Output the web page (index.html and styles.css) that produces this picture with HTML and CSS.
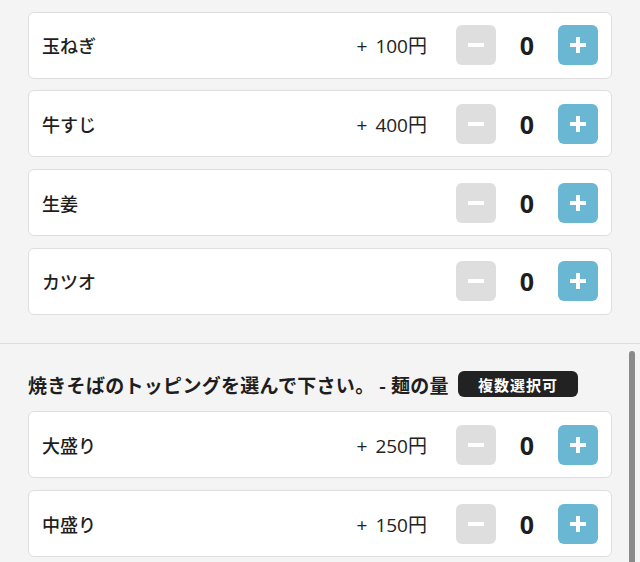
FILE: index.html
```html
<!DOCTYPE html>
<html lang="ja">
<head>
<meta charset="utf-8">
<link rel="stylesheet" href="styles.css">
</head>
<body>
<section class="group">
  <div class="card card-tail"></div>
  <div class="card">
    <span class="label">玉ねぎ</span>
    <span class="price">+ 100円</span>
    <div class="stepper">
      <button class="btn minus"><span class="bar"></span></button>
      <span class="count">0</span>
      <button class="btn plus"><span class="bar"></span><span class="bar v"></span></button>
    </div>
  </div>
  <div class="card">
    <span class="label">牛すじ</span>
    <span class="price">+ 400円</span>
    <div class="stepper">
      <button class="btn minus"><span class="bar"></span></button>
      <span class="count">0</span>
      <button class="btn plus"><span class="bar"></span><span class="bar v"></span></button>
    </div>
  </div>
  <div class="card">
    <span class="label">生姜</span>
    <div class="stepper">
      <button class="btn minus"><span class="bar"></span></button>
      <span class="count">0</span>
      <button class="btn plus"><span class="bar"></span><span class="bar v"></span></button>
    </div>
  </div>
  <div class="card">
    <span class="label">カツオ</span>
    <div class="stepper">
      <button class="btn minus"><span class="bar"></span></button>
      <span class="count">0</span>
      <button class="btn plus"><span class="bar"></span><span class="bar v"></span></button>
    </div>
  </div>
</section>
<section class="group second">
  <div class="scrollbar"></div>
  <h2 class="heading"><span>焼きそばのトッピングを選んで下さい。 - 麺の量</span><span class="badge">複数選択可</span></h2>
  <div class="card">
    <span class="label">大盛り</span>
    <span class="price">+ 250円</span>
    <div class="stepper">
      <button class="btn minus"><span class="bar"></span></button>
      <span class="count">0</span>
      <button class="btn plus"><span class="bar"></span><span class="bar v"></span></button>
    </div>
  </div>
  <div class="card">
    <span class="label">中盛り</span>
    <span class="price">+ 150円</span>
    <div class="stepper">
      <button class="btn minus"><span class="bar"></span></button>
      <span class="count">0</span>
      <button class="btn plus"><span class="bar"></span><span class="bar v"></span></button>
    </div>
  </div>
</section>
</body>
</html>
```
FILE: styles.css
```css
html, body {
  margin: 0;
  padding: 0;
  background: #f4f4f4;
  font-family: "Noto Sans CJK JP", "Noto Sans", sans-serif;
  color: #1e1e1e;
  overflow: hidden;
  height: 562px;
}
.group {
  display: flex;
  flex-direction: column;
  gap: 11.7px;
  padding: 0 28px 28.5px;
}
.second {
  position: relative;
  border-top: 1px solid #dcdcdc;
  padding-top: 27px;
  gap: 12px;
}
.card {
  box-sizing: border-box;
  height: 67px;
  background: #fff;
  border: 1px solid #dedede;
  border-radius: 6px;
  display: flex;
  align-items: center;
  padding: 0 13px;
  flex-shrink: 0;
}
.card-tail {
  height: 12px;
  margin-top: -12px;
}
.label {
  flex: 1;
  font-size: 18px;
  font-weight: 500;
}
.price {
  font-family: "Open Sans", "Noto Sans CJK JP", sans-serif;
  font-size: 19px;
  font-weight: 400;
  word-spacing: 3px;
  margin-right: 29px;
  color: #222;
}
.stepper {
  display: flex;
  align-items: center;
}
.btn {
  position: relative;
  width: 40px;
  height: 40px;
  border: 0;
  border-radius: 6px;
  padding: 0;
}
.minus { background: #dedede; }
.plus { background: #6ab7d4; }
.bar {
  position: absolute;
  left: 12px;
  top: 18px;
  width: 16px;
  height: 4px;
  background: #fff;
}
.bar.v {
  left: 18px;
  top: 12px;
  width: 4px;
  height: 16px;
}
.count {
  width: 62px;
  text-align: center;
  font-size: 25px;
  font-weight: 700;
  font-family: "Noto Sans", sans-serif;
}
.heading {
  margin: 0 0 2px;
  display: flex;
  align-items: center;
  gap: 9px;
  font-size: 19px;
  font-weight: 700;
  letter-spacing: 0.3px;
  height: 26px;
}
.badge {
  background: #222;
  color: #fff;
  font-size: 15px;
  font-weight: 700;
  border-radius: 6px;
  height: 26px;
  width: 120px;
  display: flex;
  align-items: center;
  justify-content: center;
  letter-spacing: 1px;
}
.scrollbar {
  position: absolute;
  right: 5px;
  top: 7px;
  width: 6px;
  height: 260px;
  border-radius: 3px;
  background: #8a8a8a;
}
```
